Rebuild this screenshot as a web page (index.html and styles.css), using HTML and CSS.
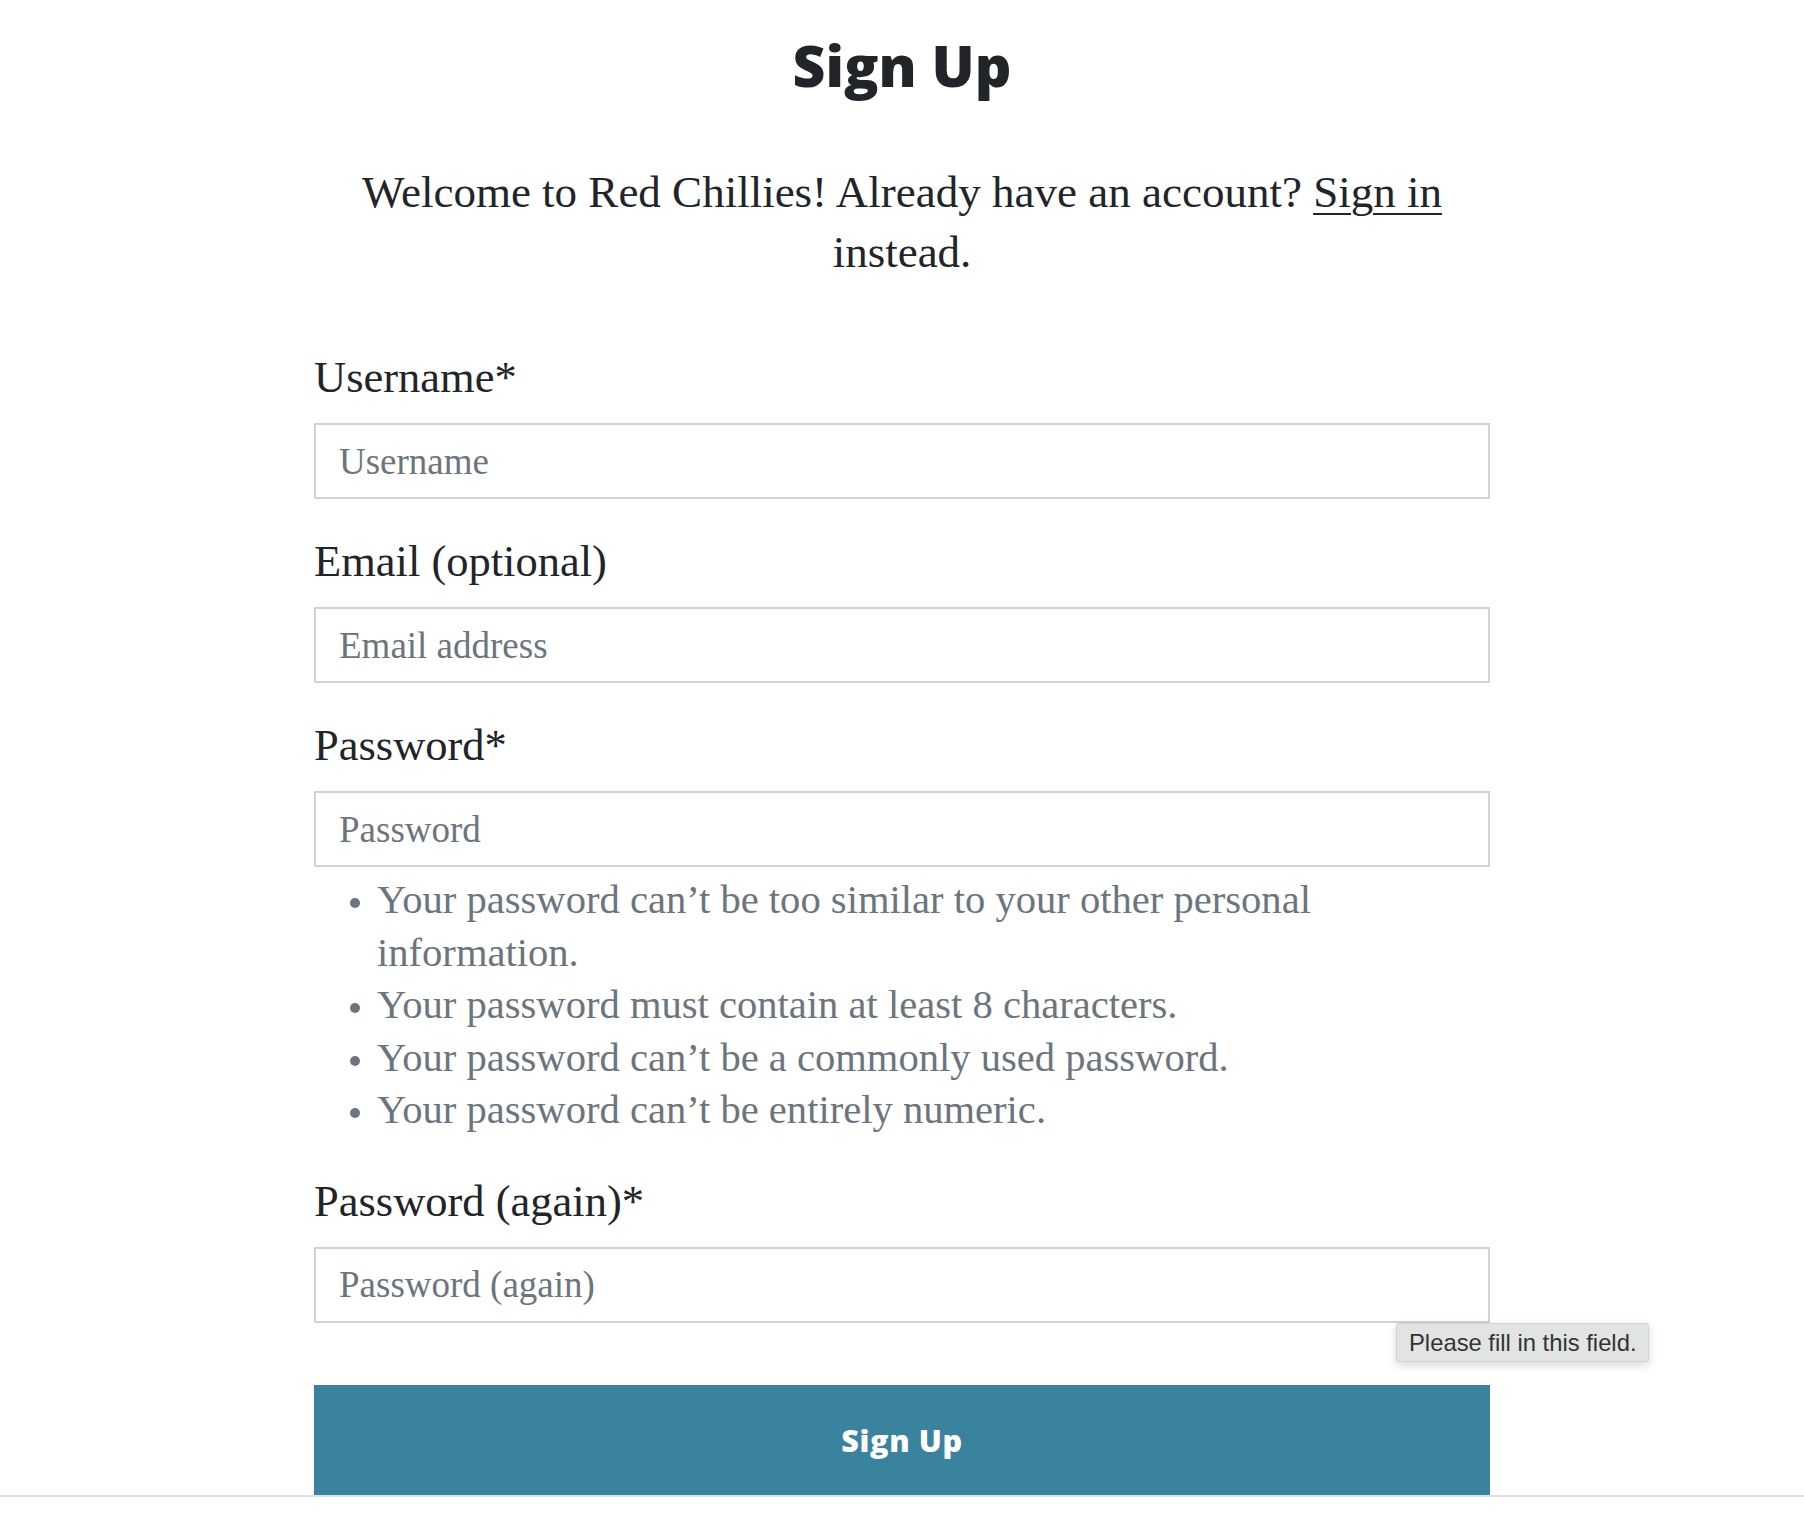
FILE: index.html
```html
<!DOCTYPE html>
<html lang="en">
<head>
<meta charset="utf-8">
<title>Sign Up</title>
<link rel="stylesheet" href="styles.css">
</head>
<body>
<main class="page">
  <h1 class="title">Sign Up</h1>
  <p class="lead">Welcome to Red Chillies! Already have an account? <a class="link" href="#">Sign in</a> instead.</p>
  <form class="form" onsubmit="return false">
    <div class="group">
      <label class="label" for="username">Username*</label>
      <input class="input" id="username" type="text" placeholder="Username">
    </div>
    <div class="group">
      <label class="label" for="email">Email (optional)</label>
      <input class="input" id="email" type="email" placeholder="Email address">
    </div>
    <div class="group group-help">
      <label class="label" for="password1">Password*</label>
      <input class="input" id="password1" type="password" placeholder="Password">
      <ul class="help">
        <li>Your password can’t be too similar to your other personal information.</li>
        <li>Your password must contain at least 8 characters.</li>
        <li>Your password can’t be a commonly used password.</li>
        <li>Your password can’t be entirely numeric.</li>
      </ul>
    </div>
    <div class="group group-last">
      <label class="label" for="password2">Password (again)*</label>
      <div class="field">
        <input class="input" id="password2" type="password" placeholder="Password (again)">
        <div class="tooltip">Please fill in this field.</div>
      </div>
    </div>
    <button class="button" type="submit">Sign Up</button>
  </form>
</main>
<footer class="footer"></footer>
</body>
</html>
```

FILE: styles.css
```css
html, body {
  margin: 0;
  padding: 0;
  background: #ffffff;
}

body {
  font-family: "Liberation Serif", "DejaVu Serif", serif;
  color: #212529;
  height: 1532px;
  overflow: hidden;
}

.page {
  width: 1176px;
  margin: 0 auto;
}

.title {
  margin: 29px 0 0;
  height: 72px;
  font-family: "Open Sans", "Liberation Sans", sans-serif;
  font-weight: 800;
  font-size: 57px;
  line-height: 72px;
  text-align: center;
  color: #212529;
}

.lead {
  margin: 61px 0 0;
  font-size: 45px;
  line-height: 60px;
  text-align: center;
}

.link {
  color: #212529;
  text-decoration: underline;
  text-decoration-thickness: 2px;
  text-underline-offset: 6px;
}

.form {
  margin-top: 65px;
  display: flex;
  flex-direction: column;
}

.group {
  display: flex;
  flex-direction: column;
  margin-bottom: 32px;
}

.group-help {
  margin-bottom: 34px;
}

.group-last {
  margin-bottom: 62px;
}

.label {
  font-size: 44.5px;
  line-height: 60px;
  margin-bottom: 16px;
  color: #212529;
}

.field {
  position: relative;
}

.input {
  box-sizing: border-box;
  display: block;
  width: 100%;
  height: 76px;
  margin: 0;
  padding: 0 22px 0 23px;
  border: 2px solid #ced4da;
  border-radius: 0;
  background: #ffffff;
  font-family: "Liberation Serif", "DejaVu Serif", serif;
  font-size: 37px;
  color: #212529;
  outline: none;
}

.input::placeholder {
  color: #6c757d;
  opacity: 1;
}

.help {
  margin: 7px 0 0;
  padding: 0 60px 0 63px;
  font-size: 40.6px;
  line-height: 52.5px;
  color: #6c757d;
}

.help li::marker {
  font-size: 34px;
}

.tooltip {
  position: absolute;
  top: 100%;
  left: 1082px;
  box-sizing: border-box;
  width: 253px;
  height: 39px;
  padding: 0 0 0 12px;
  background: #e2e3e3;
  border: 1px solid #d2d3d3;
  border-radius: 3px;
  box-shadow: 0 3px 10px rgba(0, 0, 0, 0.16);
  font-family: "Liberation Sans", Arial, sans-serif;
  font-size: 23.8px;
  line-height: 37px;
  color: #333333;
  white-space: nowrap;
}

.button {
  display: block;
  width: 100%;
  height: 110px;
  margin: 0;
  padding: 0;
  border: 0;
  border-radius: 0;
  background: #3a839e;
  color: #ffffff;
  font-family: "Open Sans", "Liberation Sans", sans-serif;
  font-weight: 800;
  font-size: 30.5px;
  letter-spacing: 0.6px;
}

.footer {
  height: 0;
  border-top: 2px solid #dee2e6;
}
```
